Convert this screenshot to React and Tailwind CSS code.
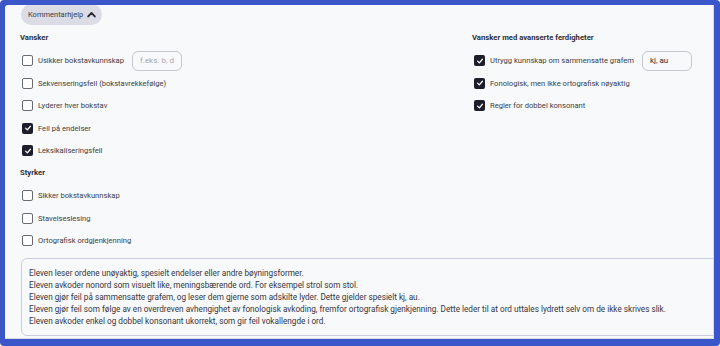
import React from "react";

const Box = ({ checked }) =>
  checked ? (
    <span className="flex h-[11px] w-[11px] shrink-0 items-center justify-center rounded-[2px] bg-[#1d1d2b]">
      <svg width="8" height="8" viewBox="0 0 10 10">
        <path d="M2 5.2 L4.2 7.3 L8 2.8" fill="none" stroke="white" strokeWidth="1.6" strokeLinecap="round" strokeLinejoin="round" />
      </svg>
    </span>
  ) : (
    <span className="block h-[11px] w-[11px] shrink-0 rounded-[2px] border border-[#6b6b75] bg-white" />
  );

const Row = ({ label, checked, input, placeholder }) => (
  <div className="flex h-[22.5px] items-center whitespace-nowrap">
    <span className="ml-[2px] block"><Box checked={checked} /></span>
    <span className="ml-[5px] text-[7.6px] text-[#3d3d45]">{label}</span>
    {input !== undefined && (
      <div
        className={`ml-[8px] flex h-[20px] w-[50px] shrink-0 items-center rounded-[6px] border border-[#c8c8cc] bg-[#f8f9fb] px-[7px] text-[8px] ${input ? "text-[#2a2a30]" : "text-[#a8a8b0]"}`}
      >
        {input || placeholder}
      </div>
    )}
  </div>
);

const Heading = ({ children }) => (
  <div className="flex h-[22.5px] items-center whitespace-nowrap text-[7.7px] font-bold text-[#2e2e36]">{children}</div>
);

export default function App() {
  return (
    <div
      className="h-[346px] w-[720px] overflow-hidden rounded-[4px] bg-[#3a56c8] pb-[7px] pl-[5px] pr-[6px] pt-[5px]"
      style={{ fontFamily: "Roboto, 'Noto Sans', sans-serif" }}
    >
      <div className="relative h-full w-full overflow-hidden rounded-tl-[3px] border-r border-b border-[#d8dae4] bg-[#f8f9fb] pl-[15px]">
        <div className="-mt-[1px] ml-[1px] flex h-[21px] w-fit items-center gap-[3px] whitespace-nowrap rounded-full bg-[#dcdce6] pl-[7px] pr-[5px] text-[7.5px] text-[#3a3a44]">
          <span>Kommentarhjelp</span>
          <svg width="11" height="11" viewBox="0 0 10 10">
            <path d="M2 6.8 L5 3.6 L8 6.8" fill="none" stroke="#2a2a35" strokeWidth="1.7" strokeLinecap="round" strokeLinejoin="round" />
          </svg>
        </div>
        <div className="mt-[2px] flex">
          <div className="w-[452px]">
            <Heading>Vansker</Heading>
            <Row label="Usikker bokstavkunnskap" input="" placeholder="f.eks. b, d" />
            <Row label="Sekvenseringsfeil (bokstavrekkefølge)" />
            <Row label="Lyderer hver bokstav" />
            <Row label="Feil på endelser" checked />
            <Row label="Leksikaliseringsfeil" checked />
            <Heading>Styrker</Heading>
            <Row label="Sikker bokstavkunnskap" />
            <Row label="Stavelseslesing" />
            <Row label="Ortografisk ordgjenkjenning" />
          </div>
          <div className="w-[230px]">
            <Heading>Vansker med avanserte ferdigheter</Heading>
            <Row label="Utrygg kunnskap om sammensatte grafem" input="kj, au" checked />
            <Row label="Fonologisk, men ikke ortografisk nøyaktig" checked />
            <Row label="Regler for dobbel konsonant" checked />
          </div>
        </div>
        <div className="ml-[1px] mt-[6px] h-[78px] w-[720px] rounded-[6px] border border-[#c9cce0] bg-[#f8f9fb] px-[7px] pt-[8px] text-[8.2px] leading-[12px] text-[#35353d]">
          <div>Eleven leser ordene unøyaktig, spesielt endelser eller andre bøyningsformer.</div>
          <div>Eleven avkoder nonord som visuelt like, meningsbærende ord. For eksempel strol som stol.</div>
          <div>Eleven gjør feil på sammensatte grafem, og leser dem gjerne som adskilte lyder. Dette gjelder spesielt kj, au.</div>
          <div>Eleven gjør feil som følge av en overdreven avhengighet av fonologisk avkoding, fremfor ortografisk gjenkjenning. Dette leder til at ord uttales lydrett selv om de ikke skrives slik.</div>
          <div>Eleven avkoder enkel og dobbel konsonant ukorrekt, som gir feil vokallengde i ord.</div>
        </div>
      </div>
    </div>
  );
}
